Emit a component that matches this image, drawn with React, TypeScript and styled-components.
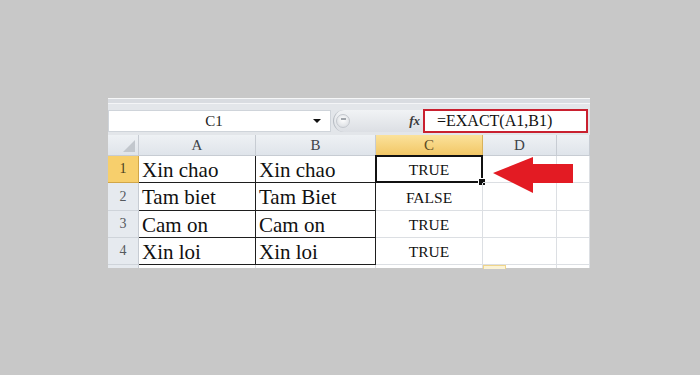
import { Fragment } from "react";
import styled, { createGlobalStyle } from "styled-components";

const GlobalStyle = createGlobalStyle`
  html, body {
    margin: 0;
    padding: 0;
    background: #c8c8c8;
  }
  * { box-sizing: border-box; }
`;

const Page = styled.div`
  width: 700px;
  height: 375px;
  padding: 98px 0 0 108px;
  font-family: "Liberation Serif", "Times New Roman", serif;
`;

const Frame = styled.div`
  width: 482px;
  background: #e3e6ea;
`;

const TopStrip = styled.div`
  height: 6px;
  border-top: 1px solid #f6f7f8;
  border-bottom: 1px solid #f4f5f7;
  background: #d9dce1;
`;

const FormulaRow = styled.div`
  display: flex;
  align-items: center;
  height: 31px;
  padding: 5px 2px 2px 0;
`;

const NameBox = styled.div`
  width: 223px;
  height: 22px;
  display: flex;
  align-items: center;
  background: #fff;
  border: 1px solid #cfd4da;
  font-size: 15px;
  color: #222;
`;

const NameText = styled.span`
  flex: 1;
  text-align: center;
  padding-left: 6px;
`;

const DropArrow = styled.span`
  width: 0;
  height: 0;
  margin-right: 9px;
  border-left: 4px solid transparent;
  border-right: 4px solid transparent;
  border-top: 4px solid #111;
`;

const Slider = styled.div`
  flex: 1;
  height: 22px;
  margin-left: 2px;
  display: flex;
  align-items: center;
  justify-content: space-between;
  padding: 0 3px 0 2px;
  border-radius: 11px 0 0 11px;
  background: linear-gradient(#f1f3f5, #dcdfe4);
  border-left: 1px solid #b7bcc3;
`;

const Knob = styled.span`
  width: 14px;
  height: 14px;
  border-radius: 50%;
  background: radial-gradient(circle at 50% 40%, #ffffff, #d3d7dc);
  border: 1px solid #c4c8ce;
  display: flex;
  align-items: flex-start;
  justify-content: center;
  &::after {
    content: "";
    width: 5px;
    height: 2px;
    margin-top: 3px;
    background: #a0a5ab;
  }
`;

const Fx = styled.span`
  font-style: italic;
  font-weight: bold;
  font-size: 13px;
  color: #3a3a3a;
`;

const FormulaBox = styled.div`
  width: 165px;
  height: 24px;
  display: flex;
  align-items: center;
  padding-left: 12px;
  background: #fff;
  border: 2px solid #c9202f;
  font-size: 16px;
  color: #111;
`;

const Sheet = styled.div`
  position: relative;
  display: grid;
  grid-template-columns: 31px 117px 120px 107px 74px 33px;
  grid-template-rows: 21px 27px 28px 27px 27px 3px;
  background: #fff;
`;

const Corner = styled.div`
  position: relative;
  background: linear-gradient(#eef1f4, #dfe4ea);
  border-right: 1px solid #c7ccd3;
  border-bottom: 1px solid #c7ccd3;
  &::after {
    content: "";
    position: absolute;
    right: 3px;
    bottom: 3px;
    border-left: 12px solid transparent;
    border-bottom: 12px solid #c2c7cd;
  }
`;

const ColHeader = styled.div<{ $active?: boolean }>`
  display: flex;
  align-items: center;
  justify-content: center;
  font-size: 15px;
  color: ${(p) => (p.$active ? "#5b4a22" : "#3e4348")};
  background: ${(p) =>
    p.$active
      ? "linear-gradient(#fbe29b, #f2c766)"
      : "linear-gradient(#eef1f4, #dfe4ea)"};
  border-right: 1px solid ${(p) => (p.$active ? "#d9b25a" : "#c7ccd3")};
  border-bottom: 1px solid ${(p) => (p.$active ? "#c99b3a" : "#c7ccd3")};
`;

const RowHeader = styled.div<{ $active?: boolean }>`
  display: flex;
  align-items: center;
  justify-content: center;
  font-size: 14px;
  color: ${(p) => (p.$active ? "#4a3d1e" : "#55595e")};
  background: ${(p) => (p.$active ? "#f7cf6c" : "#e6eaef")};
  border-right: 1px solid ${(p) => (p.$active ? "#d1a648" : "#c7ccd3")};
  border-bottom: 1px solid ${(p) => (p.$active ? "#d1a648" : "#cfd4da")};
`;

const Cell = styled.div<{ $boxed?: boolean; $center?: boolean; $selected?: boolean }>`
  position: relative;
  display: flex;
  align-items: center;
  justify-content: ${(p) => (p.$center ? "center" : "flex-start")};
  padding: ${(p) => (p.$center ? "2px 0 0" : "2px 0 0 3px")};
  font-size: ${(p) => (p.$center ? "15.5px" : "21px")};
  color: #111;
  border-right: 1px solid ${(p) => (p.$boxed ? "#1e1e1e" : "#dcdfe3")};
  border-bottom: 1px solid ${(p) => (p.$boxed ? "#1e1e1e" : "#dcdfe3")};
  ${(p) =>
    p.$selected &&
    `
    &::before {
      content: "";
      position: absolute;
      inset: -1px -1px -1px -1px;
      border: 2px solid #111;
    }
    &::after {
      content: "";
      position: absolute;
      right: -4px;
      bottom: -4px;
      width: 6px;
      height: 6px;
      background: #111;
      border: 1px solid #fff;
    }
  `}
`;

const Tail = styled.div<{ $header?: boolean }>`
  background: ${(p) => (p.$header ? "#e6eaef" : "#fff")};
  border-right: 1px solid ${(p) => (p.$header ? "#c7ccd3" : "#dcdfe3")};
`;

const Marker = styled.div`
  background: #fff;
  border-right: 1px solid #dcdfe3;
  &::after {
    content: "";
    display: block;
    width: 21px;
    height: 3px;
    border: 1px solid #f0d58a;
    border-bottom: none;
    background: #fbf3d6;
  }
`;

const Arrow = styled.svg`
  position: absolute;
  left: 385px;
  top: 22px;
`;

const columns = ["A", "B", "C", "D", "E"];

const rows = [
  ["Xin chao", "Xin chao", "TRUE"],
  ["Tam biet", "Tam Biet", "FALSE"],
  ["Cam on", "Cam on", "TRUE"],
  ["Xin loi", "Xin loi", "TRUE"],
];

export default function App() {
  return (
    <Page>
      <GlobalStyle />
      <Frame>
        <TopStrip />
        <FormulaRow>
          <NameBox>
            <NameText>C1</NameText>
            <DropArrow />
          </NameBox>
          <Slider>
            <Knob />
            <Fx>fx</Fx>
          </Slider>
          <FormulaBox>=EXACT(A1,B1)</FormulaBox>
        </FormulaRow>
        <Sheet>
          <Corner />
          {columns.map((c) => (
            <ColHeader key={c} $active={c === "C"}>
              {c === "E" ? "" : c}
            </ColHeader>
          ))}
          {rows.map((r, i) => (
            <Fragment key={i}>
              <RowHeader $active={i === 0}>{i + 1}</RowHeader>
              <Cell $boxed>{r[0]}</Cell>
              <Cell $boxed>{r[1]}</Cell>
              <Cell $center $selected={i === 0}>
                {r[2]}
              </Cell>
              <Cell />
              <Cell />
            </Fragment>
          ))}
          <Tail $header />
          <Tail />
          <Tail />
          <Tail />
          <Marker />
          <Tail />
          <Arrow width="80" height="36" viewBox="0 0 80 36">
            <polygon
              points="0,16 40,0 40,7 80,7 80,26 40,26 40,36"
              fill="#e31b23"
            />
          </Arrow>
        </Sheet>
      </Frame>
    </Page>
  );
}
